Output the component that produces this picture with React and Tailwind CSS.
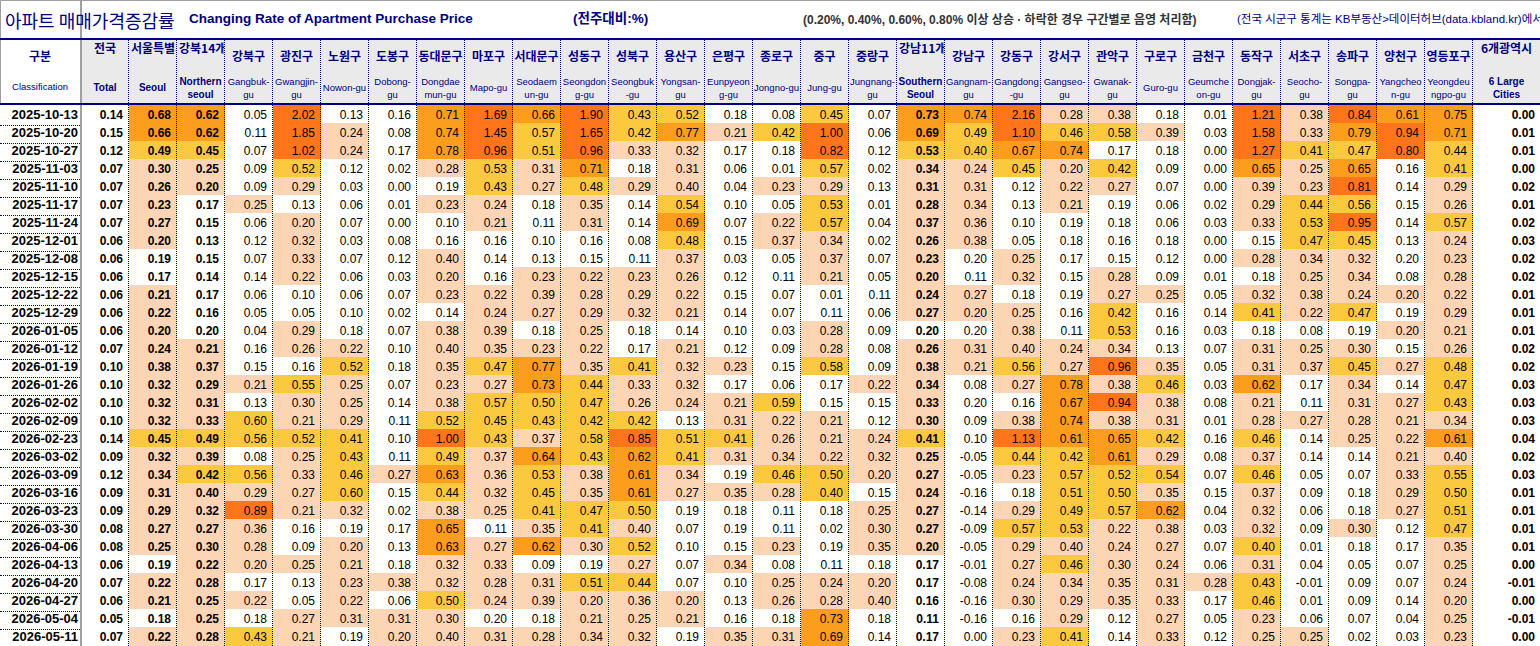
import React from "react";

const COLS = [
  { ko: "전국", en: ["Total"], bold: true, top: true },
  { ko: "서울특별시", en: ["Seoul"], bold: true, top: true, clip: true },
  { ko: "강북14개구", en: ["Northern", "seoul"], bold: true, top: true, clip: true },
  { ko: "강북구", en: ["Gangbuk-", "gu"] },
  { ko: "광진구", en: ["Gwangjin-", "gu"] },
  { ko: "노원구", en: ["Nowon-gu"] },
  { ko: "도봉구", en: ["Dobong-", "gu"] },
  { ko: "동대문구", en: ["Dongdae", "mun-gu"] },
  { ko: "마포구", en: ["Mapo-gu"] },
  { ko: "서대문구", en: ["Seodaem", "un-gu"] },
  { ko: "성동구", en: ["Seongdon", "g-gu"] },
  { ko: "성북구", en: ["Seongbuk", "-gu"] },
  { ko: "용산구", en: ["Yongsan-", "gu"] },
  { ko: "은평구", en: ["Eunpyeon", "g-gu"] },
  { ko: "종로구", en: ["Jongno-gu"] },
  { ko: "중구", en: ["Jung-gu"] },
  { ko: "중랑구", en: ["Jungnang-", "gu"] },
  { ko: "강남11개구", en: ["Southern", "Seoul"], bold: true, top: true, clip: true },
  { ko: "강남구", en: ["Gangnam-", "gu"] },
  { ko: "강동구", en: ["Gangdong", "-gu"] },
  { ko: "강서구", en: ["Gangseo-", "gu"] },
  { ko: "관악구", en: ["Gwanak-", "gu"] },
  { ko: "구로구", en: ["Guro-gu"] },
  { ko: "금천구", en: ["Geumche", "on-gu"] },
  { ko: "동작구", en: ["Dongjak-", "gu"] },
  { ko: "서초구", en: ["Seocho-", "gu"] },
  { ko: "송파구", en: ["Songpa-", "gu"] },
  { ko: "양천구", en: ["Yangcheo", "n-gu"] },
  { ko: "영등포구", en: ["Yeongdeu", "ngpo-gu"] },
  { ko: "6개광역시", en: ["6 Large", "Cities"], bold: true, top: true, last: true },
];

const ROWS = [
  ["2025-10-13", "0.14 0.68 0.62 0.05 2.02 0.13 0.16 0.71 1.69 0.66 1.90 0.43 0.52 0.18 0.08 0.45 0.07 0.73 0.74 2.16 0.28 0.38 0.18 0.01 1.21 0.38 0.84 0.61 0.75 0.00"],
  ["2025-10-20", "0.15 0.66 0.62 0.11 1.85 0.24 0.08 0.74 1.45 0.57 1.65 0.42 0.77 0.21 0.42 1.00 0.06 0.69 0.49 1.10 0.46 0.58 0.39 0.03 1.58 0.33 0.79 0.94 0.71 0.01"],
  ["2025-10-27", "0.12 0.49 0.45 0.07 1.02 0.24 0.17 0.78 0.96 0.51 0.96 0.33 0.32 0.17 0.18 0.82 0.12 0.53 0.40 0.67 0.74 0.17 0.18 0.00 1.27 0.41 0.47 0.80 0.44 0.01"],
  ["2025-11-03", "0.07 0.30 0.25 0.09 0.52 0.12 0.02 0.28 0.53 0.31 0.71 0.18 0.31 0.06 0.01 0.57 0.02 0.34 0.24 0.45 0.20 0.42 0.09 0.00 0.65 0.25 0.65 0.16 0.41 0.00"],
  ["2025-11-10", "0.07 0.26 0.20 0.09 0.29 0.03 0.00 0.19 0.43 0.27 0.48 0.29 0.40* 0.04 0.23 0.29 0.13 0.31 0.31 0.12 0.22 0.27 0.07 0.00 0.39 0.23 0.81 0.14 0.29 0.02"],
  ["2025-11-17", "0.07 0.23 0.17 0.25 0.13 0.06 0.01 0.23 0.24 0.18 0.35 0.14 0.54 0.10 0.05 0.53 0.01 0.28 0.34 0.13 0.21 0.19 0.06 0.02 0.29 0.44 0.56 0.15 0.26 0.01"],
  ["2025-11-24", "0.07 0.27 0.15 0.06 0.20 0.07 0.00 0.10 0.21 0.11 0.31 0.14 0.69 0.07 0.22 0.57 0.04 0.37 0.36 0.10 0.19 0.18 0.06 0.03 0.33 0.53 0.95 0.14 0.57 0.02"],
  ["2025-12-01", "0.06 0.20 0.13 0.12 0.32 0.03 0.08 0.16 0.16 0.10 0.16 0.08 0.48 0.15 0.37 0.34 0.02 0.26 0.38 0.05 0.18 0.16 0.18 0.00 0.15 0.47 0.45 0.13 0.24 0.03"],
  ["2025-12-08", "0.06 0.19 0.15 0.07 0.33 0.07 0.12 0.40* 0.14 0.13 0.15 0.11 0.37 0.03 0.05 0.37 0.07 0.23 0.20* 0.25 0.17 0.15 0.12 0.00 0.28 0.34 0.32 0.20* 0.23 0.02"],
  ["2025-12-15", "0.06 0.17 0.14 0.14 0.22 0.06 0.03 0.20 0.16 0.23 0.22 0.23 0.26 0.12 0.11 0.21 0.05 0.20 0.11 0.32 0.15 0.28 0.09 0.01 0.18 0.25 0.34 0.08 0.28 0.02"],
  ["2025-12-22", "0.06 0.21 0.17 0.06 0.10 0.06 0.07 0.23 0.22 0.39 0.28 0.29 0.22 0.15 0.07 0.01 0.11 0.24 0.27 0.18 0.19 0.27 0.25 0.05 0.32 0.38 0.24 0.20 0.22 0.01"],
  ["2025-12-29", "0.06 0.22 0.16 0.05 0.05 0.10 0.02 0.14 0.24 0.27 0.29 0.32 0.21 0.14 0.07 0.11 0.06 0.27 0.20 0.25 0.16 0.42 0.16 0.14 0.41 0.22 0.47 0.19 0.29 0.01"],
  ["2026-01-05", "0.06 0.20 0.20* 0.04 0.29 0.18 0.07 0.38 0.39 0.18 0.25 0.18 0.14 0.10 0.03 0.28 0.09 0.20* 0.20* 0.38 0.11 0.53 0.16 0.03 0.18 0.08 0.19 0.20 0.21 0.01"],
  ["2026-01-12", "0.07 0.24 0.21 0.16 0.26 0.22 0.10 0.40* 0.35 0.23 0.22 0.17 0.21 0.12 0.09 0.28 0.08 0.26 0.31 0.40* 0.24 0.34 0.13 0.07 0.31 0.25 0.30 0.15 0.26 0.02"],
  ["2026-01-19", "0.10 0.38 0.37 0.15 0.16 0.52 0.18 0.35 0.47 0.77 0.35 0.41 0.32 0.23 0.15 0.58 0.09 0.38 0.21 0.56 0.27 0.96 0.35 0.05 0.31 0.37 0.45 0.27 0.48 0.02"],
  ["2026-01-26", "0.10 0.32 0.29 0.21 0.55 0.25 0.07 0.23 0.27 0.73 0.44 0.33 0.32 0.17 0.06 0.17 0.22 0.34 0.08 0.27 0.78 0.38 0.46 0.03 0.62 0.17 0.34 0.14 0.47 0.03"],
  ["2026-02-02", "0.10 0.32 0.31 0.13 0.30 0.25 0.14 0.38 0.57 0.50 0.47 0.26 0.24 0.21 0.59 0.15 0.15 0.33 0.20* 0.16 0.67 0.94 0.38 0.08 0.21 0.11 0.31 0.27 0.43 0.03"],
  ["2026-02-09", "0.10 0.32 0.33 0.60* 0.21 0.29 0.11 0.52 0.45 0.43 0.42 0.42 0.13 0.31 0.22 0.21 0.12 0.30 0.09 0.38 0.74 0.38 0.31 0.01 0.28 0.27 0.28 0.21 0.34 0.03"],
  ["2026-02-23", "0.14 0.45 0.49 0.56 0.52 0.41 0.10 1.00 0.43 0.37 0.58 0.85 0.51 0.41 0.26 0.21 0.24 0.41 0.10 1.13 0.61 0.65 0.42 0.16 0.46 0.14 0.25 0.22 0.61 0.04"],
  ["2026-03-02", "0.09 0.32 0.39 0.08 0.25 0.43 0.11 0.49 0.37 0.64 0.43 0.62 0.41 0.31 0.34 0.22 0.32 0.25 -0.05 0.44 0.42 0.61 0.29 0.08 0.37 0.14 0.14 0.21 0.40* 0.02"],
  ["2026-03-09", "0.12 0.34 0.42 0.56 0.33 0.46 0.27 0.63 0.36 0.53 0.38 0.61 0.34 0.19 0.46 0.50 0.20 0.27 -0.05 0.23 0.57 0.52 0.54 0.07 0.46 0.05 0.07 0.33 0.55 0.03"],
  ["2026-03-16", "0.09 0.31 0.40* 0.29 0.27 0.60* 0.15 0.44 0.32 0.45 0.35 0.61 0.27 0.35 0.28 0.40 0.15 0.24 -0.16 0.18 0.51 0.50 0.35 0.15 0.37 0.09 0.18 0.29 0.50 0.01"],
  ["2026-03-23", "0.09 0.29 0.32 0.89 0.21 0.32 0.02 0.38 0.25 0.41 0.47 0.50 0.19 0.18 0.11 0.18 0.25 0.27 -0.14 0.29 0.49 0.57 0.62 0.04 0.32 0.06 0.18 0.27 0.51 0.01"],
  ["2026-03-30", "0.08 0.27 0.27 0.36 0.16 0.19 0.17 0.65 0.11 0.35 0.41 0.40* 0.07 0.19 0.11 0.02 0.30 0.27 -0.09 0.57 0.53 0.22 0.38 0.03 0.32 0.09 0.30 0.12 0.47 0.01"],
  ["2026-04-06", "0.08 0.25 0.30 0.28 0.09 0.20 0.13 0.63 0.27 0.62 0.30 0.52 0.10 0.15 0.23 0.19 0.35 0.20 -0.05 0.29 0.40* 0.24 0.27 0.07 0.40 0.01 0.18 0.17 0.35 0.01"],
  ["2026-04-13", "0.06 0.19 0.22 0.20 0.25 0.21 0.18 0.32 0.33 0.09 0.19 0.27 0.07 0.34 0.08 0.11 0.18 0.17 -0.01 0.27 0.46 0.30 0.24 0.06 0.31 0.04 0.05 0.07 0.25 0.00"],
  ["2026-04-20", "0.07 0.22 0.28 0.17 0.13 0.23 0.38 0.32 0.28 0.31 0.51 0.44 0.07 0.10 0.25 0.24 0.20 0.17 -0.08 0.24 0.34 0.35 0.31 0.28 0.43 -0.01 0.09 0.07 0.24 -0.01"],
  ["2026-04-27", "0.06 0.21 0.25 0.22 0.05 0.22 0.06 0.50 0.24 0.39 0.20 0.36 0.20 0.13 0.26 0.28 0.40* 0.16 -0.16 0.30 0.29 0.35 0.33 0.17 0.46 0.01 0.09 0.14 0.20 0.00"],
  ["2026-05-04", "0.05 0.18 0.25 0.18 0.27 0.31 0.31 0.30 0.20* 0.18 0.21 0.25 0.21 0.16 0.18 0.73 0.18 0.11 -0.16 0.16 0.29 0.12 0.27 0.05 0.23 0.06 0.07 0.04 0.25 -0.01"],
  ["2026-05-11", "0.07 0.22 0.28 0.43 0.21 0.19 0.20 0.40* 0.31 0.28 0.34 0.32 0.19 0.35 0.31 0.69 0.14 0.17 0.00 0.23 0.41 0.14 0.33 0.12 0.25 0.25 0.02 0.03 0.23 0.00"],
];

const BG = ["bg-white", "bg-[#fbd5b5]", "bg-[#fac93f]", "bg-[#fb9e1e]", "bg-[#fe7619]"];

function level(raw, idx) {
  if (idx === 0 || idx === 29) return 0;
  const demote = raw.endsWith("*");
  const v = parseFloat(raw);
  let l = v >= 0.8 ? 4 : v >= 0.6 ? 3 : v >= 0.4 ? 2 : v >= 0.2 ? 1 : 0;
  if (demote) l -= 1;
  return Math.max(0, l);
}

const GRID = "grid grid-cols-[82px_47px_repeat(28,48px)_1fr]";
const SANS = "font-['Liberation_Sans','Noto_Sans_CJK_KR',sans-serif]";
const KR = "font-['Noto_Sans_CJK_KR','Liberation_Sans',sans-serif]";

function HeaderCell({ c }) {
  const koBox = c.top
    ? c.clip
      ? "items-start justify-start pl-[2px] pt-[1px]"
      : "items-start justify-center pt-[1px]"
    : "items-center justify-center";
  return (
    <div
      className={`flex flex-col bg-[#eaeaea] overflow-hidden ${
        c.last ? "" : "border-r border-dotted border-[#000080]"
      }`}
    >
      <div className={`h-[32px] flex overflow-hidden ${koBox}`}>
        <span className={`${KR} whitespace-nowrap text-[12px] leading-[14px] font-bold text-[#000080]`}>
          {c.ko}
        </span>
      </div>
      <div
        className={`flex-1 flex flex-col items-center justify-center text-center leading-[13px] text-[#000080] ${SANS} ${
          c.bold ? "font-bold text-[10px]" : "text-[9.5px]"
        }`}
      >
        {c.en.map((l, i) => (
          <span key={i} className="whitespace-nowrap">
            {l}
          </span>
        ))}
      </div>
    </div>
  );
}

function DataRow({ date, vals }) {
  const list = vals.split(" ");
  return (
    <div className={`${GRID} h-[18px]`}>
      <div
        className={`${SANS} flex items-center justify-end pr-[2px] text-[13px] font-bold text-black border-b border-r-2 border-b-[#000080] border-r-[#a0a0a0] [border-style:dotted_solid_dotted_dotted]`}
      >
        {date}
      </div>
      {list.map((raw, i) => {
        const c = COLS[i];
        const lv = level(raw, i);
        return (
          <div
            key={i}
            className={`${SANS} ${BG[lv]} flex items-center justify-end pr-[5px] text-[12px] text-black border-b border-dotted border-[#000080] ${
              c.last ? "" : "border-r"
            } ${c.bold ? "font-bold" : ""}`}
          >
            {raw.replace("*", "")}
          </div>
        );
      })}
    </div>
  );
}

export default function App() {
  return (
    <div className="w-[1540px] h-[646px] overflow-hidden bg-white">
      {/* Title row */}
      <div className="flex h-[40px] border-t border-t-[#a0a0a0] border-b-2 border-b-[#000080] shadow-[inset_1px_0_0_#a0a0a0]">
        <div className="w-[82px] shrink-0 border-r-2 border-r-[#a0a0a0] flex items-center pl-[5px]">
          <span className={`${KR} whitespace-nowrap text-[18px] leading-none text-[#000080]`}>
            아파트 매매가격증감률
          </span>
        </div>
        <div className="w-[491px] shrink-0 flex items-center pl-[107px]">
          <span className={`${SANS} whitespace-nowrap text-[13.5px] font-bold text-[#000080]`}>
            Changing Rate of Apartment Purchase Price
          </span>
        </div>
        <div className="w-[230px] shrink-0 flex items-center">
          <span className={`${SANS} whitespace-nowrap text-[13.5px] font-bold text-[#000080]`}>
            (전주대비:%)
          </span>
        </div>
        <div className="w-[434px] shrink-0 flex items-center">
          <span className={`${SANS} whitespace-nowrap text-[12px] font-bold text-[#333333]`}>
            (0.20%, 0.40%, 0.60%, 0.80% 이상 상승 · 하락한 경우 구간별로 음영 처리함)
          </span>
        </div>
        <div className="flex-1 min-w-0 overflow-hidden flex items-center">
          <span className={`${SANS} whitespace-nowrap text-[11.5px] text-[#000080]`}>
            (전국 시군구 통계는 KB부동산&gt;데이터허브(data.kbland.kr)에서
          </span>
        </div>
      </div>

      {/* Header row */}
      <div className={`${GRID} h-[65px] border-b-2 border-b-[#000080]`}>
        <div className="flex flex-col bg-white border-r-2 border-r-[#a0a0a0] shadow-[inset_1px_0_0_#a0a0a0]">
          <div className="h-[32px] flex items-center justify-center">
            <span className={`${KR} text-[12px] leading-[14px] font-bold text-[#000080]`}>구분</span>
          </div>
          <div className={`flex-1 flex items-center justify-center text-[9.5px] text-[#000080] ${SANS}`}>
            Classification
          </div>
        </div>
        {COLS.map((c, i) => (
          <HeaderCell key={i} c={c} />
        ))}
      </div>

      {/* Data rows */}
      {ROWS.map(([d, v]) => (
        <DataRow key={d} date={d} vals={v} />
      ))}
    </div>
  );
}
